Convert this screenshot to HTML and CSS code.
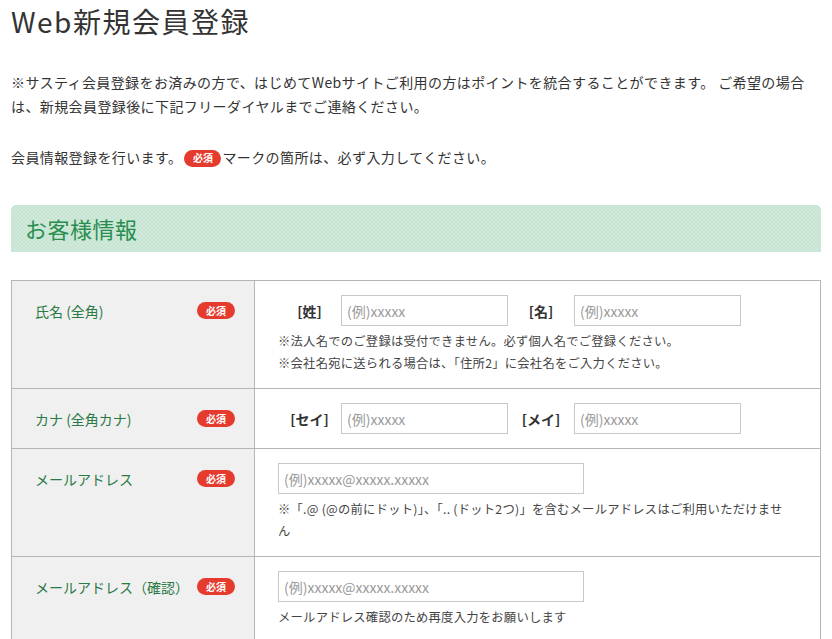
FILE: index.html
```html
<!DOCTYPE html>
<html lang="ja">
<head>
<meta charset="utf-8">
<title>Web新規会員登録</title>
<link rel="stylesheet" href="styles.css">
</head>
<body>
<div class="page">
  <h1 class="title">Web新規会員登録</h1>
  <p class="intro">※サスティ会員登録をお済みの方で、はじめてWebサイトご利用の方はポイントを統合することができます。 ご希望の場合は、新規会員登録後に下記フリーダイヤルまでご連絡ください。</p>
  <p class="intro intro-2">会員情報登録を行います。<span class="badge badge-inline">必須</span>マークの箇所は、必ず入力してください。</p>

  <h2 class="section-head">お客様情報</h2>

  <table class="form-table">
    <colgroup><col class="col-head"><col></colgroup>
    <tr>
      <th><div class="lbl"><span class="lbl-text">氏名 (全角)</span><span class="badge">必須</span></div></th>
      <td>
        <div class="pair">
          <span class="pair-label">[姓]</span><input class="field field-half" type="text" placeholder="(例)xxxxx">
          <span class="pair-label pair-label-2">[名]</span><input class="field field-half" type="text" placeholder="(例)xxxxx">
        </div>
        <p class="note">※法人名でのご登録は受付できません。必ず個人名でご登録ください。<br>※会社名宛に送られる場合は、「住所2」に会社名をご入力ください。</p>
      </td>
    </tr>
    <tr>
      <th><div class="lbl"><span class="lbl-text">カナ (全角カナ)</span><span class="badge">必須</span></div></th>
      <td>
        <div class="pair">
          <span class="pair-label">[セイ]</span><input class="field field-half" type="text" placeholder="(例)xxxxx">
          <span class="pair-label pair-label-2">[メイ]</span><input class="field field-half" type="text" placeholder="(例)xxxxx">
        </div>
      </td>
    </tr>
    <tr>
      <th><div class="lbl"><span class="lbl-text">メールアドレス</span><span class="badge">必須</span></div></th>
      <td class="wrap-cell">
        <input class="field field-mail" type="text" placeholder="(例)xxxxx@xxxxx.xxxxx">
        <p class="note">※「.@ (@の前にドット)」、「.. (ドット2つ)」を含むメールアドレスはご利用いただけません</p>
      </td>
    </tr>
    <tr>
      <th><div class="lbl"><span class="lbl-text">メールアドレス（確認）</span><span class="badge">必須</span></div></th>
      <td>
        <input class="field field-mail" type="text" placeholder="(例)xxxxx@xxxxx.xxxxx">
        <p class="note">メールアドレス確認のため再度入力をお願いします</p>
      </td>
    </tr>
  </table>
</div>
</body>
</html>
```

FILE: styles.css
```css
* { box-sizing: border-box; }

html, body {
  margin: 0;
  padding: 0;
  background: #fff;
}

body {
  font-family: "Noto Sans CJK JP", "Noto Sans", sans-serif;
  color: #333;
  font-size: 14px;
}

.page {
  padding: 0 11px 40px;
  width: 832px;
}

.title {
  margin: 0;
  font-size: 28px;
  font-weight: 400;
  line-height: 42px;
  letter-spacing: 1.5px;
  color: #333;
}

.intro {
  margin: 28px 0 0;
  font-size: 14px;
  line-height: 24px;
  letter-spacing: 0.4px;
  color: #333;
}

.intro-2 {
  margin-top: 27px;
}

.badge {
  display: inline-flex;
  align-items: center;
  justify-content: center;
  width: 38px;
  height: 17px;
  border-radius: 9px;
  background: #e53b2e;
  color: #fff;
  font-size: 10px;
  font-weight: 700;
  line-height: 1;
  letter-spacing: 0;
  flex: none;
}

.badge-inline {
  width: 37px;
  vertical-align: middle;
  margin: -2px 1px 0 2px;
}

.section-head {
  margin: 36px 0 0;
  height: 47px;
  padding: 0 14px;
  border-radius: 5px 5px 0 0;
  background-color: #c6e4d2;
  background-image:
    linear-gradient(45deg, rgba(255,255,255,0.18) 25%, transparent 25%, transparent 75%, rgba(255,255,255,0.18) 75%),
    linear-gradient(45deg, rgba(255,255,255,0.18) 25%, transparent 25%, transparent 75%, rgba(255,255,255,0.18) 75%);
  background-size: 4px 4px;
  background-position: 0 0, 2px 2px;
  color: #2a8d50;
  font-size: 22px;
  font-weight: 400;
  line-height: 47px;
  letter-spacing: 0.5px;
}

.form-table {
  margin-top: 28px;
  width: 810px;
  border-collapse: collapse;
  table-layout: fixed;
  border: 1px solid #b5b5b5;
}

.col-head { width: 243px; }

.form-table th,
.form-table td {
  border: 1px solid #b5b5b5;
  vertical-align: top;
  text-align: left;
}

.form-table th {
  background: #f0f0f0;
  padding: 14px 19px 14px 23px;
  font-weight: 400;
}

.lbl {
  display: flex;
  align-items: center;
  justify-content: space-between;
  height: 31px;
}

.lbl-text {
  color: #2a7a45;
  font-size: 14px;
  line-height: 20px;
}

.form-table td {
  padding: 14px 20px 14px 23px;
}

.form-table td.wrap-cell {
  padding-right: 32px;
}

.pair {
  display: flex;
  align-items: center;
  height: 31px;
}

.pair-label {
  width: 63px;
  text-align: center;
  font-weight: 700;
  font-size: 14px;
  color: #333;
}

.pair-label-2 {
  width: 66px;
}

.field {
  display: block;
  height: 31px;
  border: 1px solid #c8c8c8;
  border-radius: 0;
  padding: 0 5px;
  font-family: "Noto Sans CJK JP", "Noto Sans", sans-serif;
  font-size: 14px;
  color: #333;
  background: #fff;
  outline: none;
}

.field::placeholder {
  color: #9a9a9a;
}

.field-half { width: 167px; }
.field-mail { width: 306px; }

.note {
  margin: 4px 0 0;
  font-size: 12.3px;
  line-height: 22px;
  letter-spacing: 0.25px;
  color: #444;
}
```
